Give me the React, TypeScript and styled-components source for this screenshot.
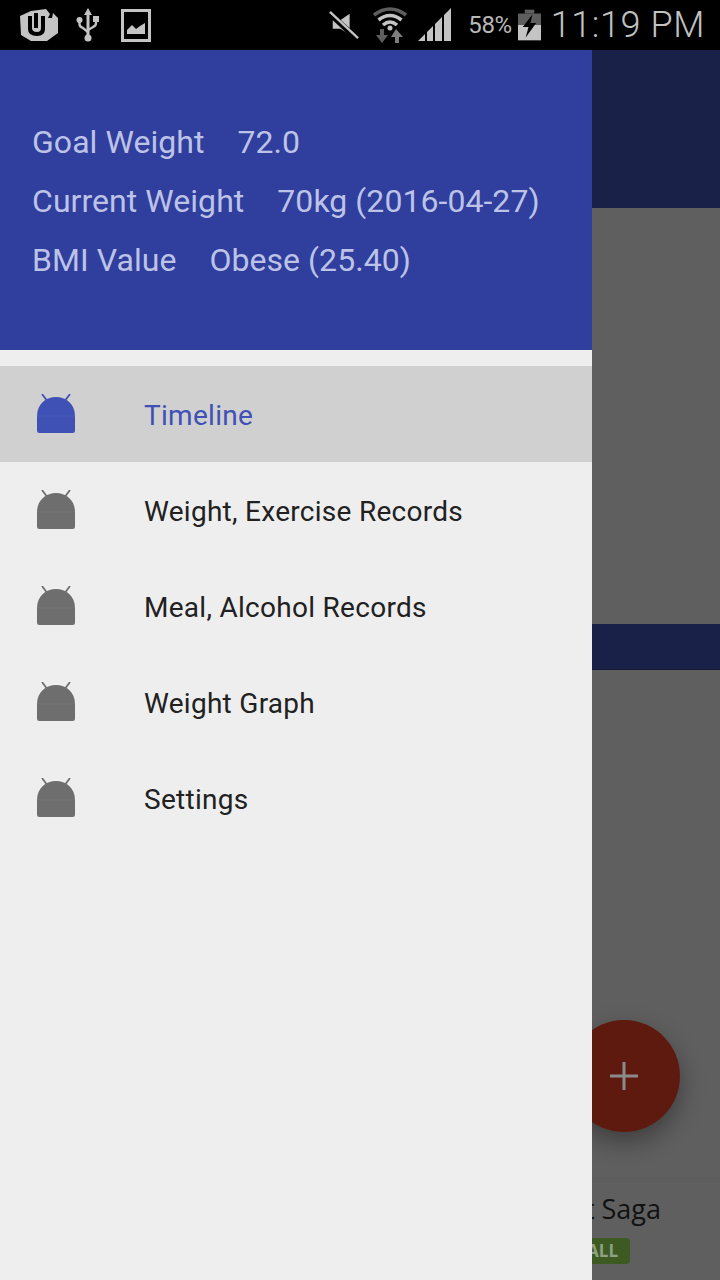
import React from 'react';
import styled, { createGlobalStyle } from 'styled-components';

const GlobalStyle = createGlobalStyle`
  html, body {
    margin: 0;
    padding: 0;
    background: #000;
  }
`;

const Screen = styled.div`
  width: 720px;
  height: 1280px;
  display: flex;
  flex-direction: column;
  overflow: hidden;
  font-family: Roboto, "Liberation Sans", sans-serif;
`;

const StatusBar = styled.div`
  height: 50px;
  flex: none;
  background: #000;
  display: flex;
  align-items: center;
  justify-content: space-between;
  color: #bdbdbd;
`;

const StatusLeft = styled.div`
  display: flex;
  align-items: center;
  padding-left: 19px;
`;

const StatusRight = styled.div`
  display: flex;
  align-items: center;
  padding-right: 15px;
`;

const StatusIcon = styled.svg<{ $gap?: number }>`
  display: block;
  flex: none;
  margin-left: ${p => p.$gap ?? 0}px;
`;

const Percent = styled.span`
  font-size: 24px;
  margin: 0 6px 0 16px;
  letter-spacing: -0.4px;
  color: #b8b8b8;
`;

const Clock = styled.span`
  font-size: 36px;
  font-weight: 300;
  margin-left: 10px;
  letter-spacing: 0.6px;
  color: #c2c2c2;
`;

const Body = styled.div`
  flex: 1;
  display: flex;
  min-height: 0;
`;

const Drawer = styled.nav`
  width: 592px;
  flex: none;
  background: #eeeeee;
  display: flex;
  flex-direction: column;
`;

const DrawerHeader = styled.div`
  height: 300px;
  box-sizing: border-box;
  background: #303e9e;
  padding: 73px 0 0 32px;
  display: flex;
  flex-direction: column;
  gap: 21px;
`;

const StatRow = styled.div`
  display: flex;
  gap: 33px;
  font-size: 32px;
  line-height: 38px;
  letter-spacing: 0.05px;
  color: #bcc3e6;
`;

const Menu = styled.ul`
  list-style: none;
  margin: 16px 0 0;
  padding: 0;
`;

const MenuItem = styled.li<{ $active?: boolean }>`
  height: 96px;
  display: flex;
  align-items: center;
  padding-left: 36px;
  gap: 68px;
  font-size: 28px;
  font-weight: 400;
  letter-spacing: 0.28px;
  background: ${p => (p.$active ? '#d0d0d0' : 'transparent')};
  color: ${p => (p.$active ? '#3f51b5' : '#212121')};

  span {
    position: relative;
    top: 1px;
  }
`;

const Backdrop = styled.div`
  position: relative;
  flex: 1;
  background: #5f5f5f;
  display: flex;
  flex-direction: column;
  overflow: hidden;
`;

const TopBand = styled.div`
  height: 158px;
  flex: none;
  background: #1a2149;
`;

const MidBand = styled.div`
  height: 46px;
  flex: none;
  margin-top: 416px;
  background: #1a2149;
  border-bottom: 1px solid #171b38;
  box-sizing: border-box;
`;

const CardFooter = styled.div`
  margin-top: auto;
  height: 102px;
  box-sizing: border-box;
  border-top: 1px solid #5b5b5b;
  display: flex;
  flex-direction: column;
  align-items: flex-end;
`;

const CardTitle = styled.div`
  font-family: "Open Sans", sans-serif;
  font-size: 27px;
  line-height: 36px;
  margin: 12px 59px 0 0;
  color: #111;
  white-space: nowrap;
`;

const CardBadge = styled.div`
  width: 60px;
  height: 26px;
  margin: 11px 90px 0 0;
  box-sizing: border-box;
  background: #3e5a23;
  border-radius: 0 4px 4px 0;
  color: #8fa183;
  font-family: "Open Sans", sans-serif;
  font-weight: 700;
  font-size: 17px;
  line-height: 26px;
  padding-right: 12px;
  text-align: right;
`;

const Fab = styled.div`
  position: absolute;
  left: -24px;
  top: 970px;
  width: 112px;
  height: 112px;
  border-radius: 50%;
  background: #5f1a10;
  box-shadow: 0 10px 24px rgba(0, 0, 0, 0.35);
  display: flex;
  align-items: center;
  justify-content: center;
`;

const DroidSvg = styled.svg`
  flex: none;
`;

const DroidIcon = ({ color }: { color: string }) => (
  <DroidSvg width="40" height="40" viewBox="0 0 40 40">
    <path d="M6 0 L12 8 M34 0 L28 8" stroke={color} strokeWidth="1.8" fill="none" />
    <path
      d="M1 22 C1 10 10 3 20 3 C30 3 39 10 39 22 L39 36.5 Q39 39 36.5 39 L3.5 39 Q1 39 1 36.5 Z"
      fill={color}
    />
    <path d="M1 22 L39 22" stroke="#fff" strokeOpacity="0.06" strokeWidth="1" />
  </DroidSvg>
);

const menu = ['Timeline', 'Weight, Exercise Records', 'Meal, Alcohol Records', 'Weight Graph', 'Settings'];

const stats = [
  ['Goal Weight', '72.0'],
  ['Current Weight', '70kg (2016-04-27)'],
  ['BMI Value', 'Obese (25.40)'],
];

export default function App() {
  return (
    <Screen>
      <GlobalStyle />
      <StatusBar>
        <StatusLeft>
          <StatusIcon width="40" height="34" viewBox="0 0 40 34">
            <path
              d="M1 8 L12 3 L27 1 L31 6 L29 10 L33 10 L34 5 L39 10 L39 25 L28 33 L12 33 L2 27 Z"
              fill="#c4c4c4"
            />
            <path d="M9 8 L9 21 Q9 28 18 28 Q26 28 26 21 L26 8 L22 8 L22 20 Q22 24 18 24 Q13 24 13 20 L13 8 Z" fill="#000" />
            <path d="M15 5 L19 5 L19 20 L15 20 Z" fill="#000" />
          </StatusIcon>
          <StatusIcon $gap={17} width="24" height="34" viewBox="0 0 24 34">
            <path d="M12 0 L16 7 L13.5 7 L13.5 27 L10.5 27 L10.5 7 L8 7 Z" fill="#c4c4c4" />
            <circle cx="12" cy="30" r="3.5" fill="#c4c4c4" />
            <circle cx="3.5" cy="12" r="3" fill="#c4c4c4" />
            <rect x="17" y="8" width="6" height="6" fill="#c4c4c4" />
            <path d="M3.5 13 L3.5 16 Q3.5 19 7 20 L12 24 M20 13 L20 15 Q20 18 17 19 L12 22" stroke="#c4c4c4" strokeWidth="2.4" fill="none" />
          </StatusIcon>
          <StatusIcon $gap={21} width="30" height="33" viewBox="0 0 30 33">
            <rect x="1.5" y="1.5" width="27" height="30" fill="none" stroke="#c4c4c4" strokeWidth="3" />
            <path d="M6 25 L6 21 L11 16 L15 20 L19 17 L24 14 L24 25 Z" fill="#c4c4c4" />
          </StatusIcon>
        </StatusLeft>
        <StatusRight>
          <StatusIcon width="30" height="30" viewBox="0 0 32 30">
            <path d="M4 10 L12 10 L22 3 L22 25 L12 19 L4 19 Z" fill="#c4c4c4" />
            <path d="M1 3 L29 29" stroke="#000" strokeWidth="6" />
            <path d="M1 1 L31 29" stroke="#c4c4c4" strokeWidth="2.5" />
          </StatusIcon>
          <StatusIcon $gap={14} width="34" height="36" viewBox="0 0 34 36">
            <path d="M1 8 Q17 -4 33 8" stroke="#5e5e5e" strokeWidth="3.5" fill="none" />
            <path d="M5.5 13 Q17 4 28.5 13" stroke="#c4c4c4" strokeWidth="3.5" fill="none" />
            <path d="M10 18 Q17 12 24 18" stroke="#c4c4c4" strokeWidth="3.5" fill="none" />
            <circle cx="17" cy="21" r="2.5" fill="#c4c4c4" />
            <path d="M9 36 L3 28 L7 28 L7 22 L11 22 L11 28 L15 28 Z" fill="#5e5e5e" />
            <path d="M23 22 L30 30 L26 30 L26 36 L22 36 L22 30 L18 30 Z" fill="#7d7d7d" />
          </StatusIcon>
          <StatusIcon $gap={11} width="34" height="34" viewBox="0 0 34 34">
            <path d="M0 33 L7 33 L7 26 Z M9 33 L15 33 L15 18 L9 24 Z M17 33 L24 33 L24 9 L17 16 Z M26 33 L33 33 L33 0 L26 7 Z" fill="#c4c4c4" />
          </StatusIcon>
          <Percent>58%</Percent>
          <StatusIcon width="23" height="32" viewBox="0 0 24 32">
            <rect x="7" y="0" width="10" height="4" fill="#5e5e5e" />
            <rect x="0" y="4" width="24" height="12" fill="#5e5e5e" />
            <rect x="0" y="16" width="24" height="16" fill="#c4c4c4" />
            <path d="M15 5 L5 18 L11 18 L8 29 L19 14 L13 14 Z" fill="#000" />
          </StatusIcon>
          <Clock>11:19 PM</Clock>
        </StatusRight>
      </StatusBar>
      <Body>
        <Drawer>
          <DrawerHeader>
            {stats.map(([label, value]) => (
              <StatRow key={label}>
                <span>{label}</span>
                <span>{value}</span>
              </StatRow>
            ))}
          </DrawerHeader>
          <Menu>
            {menu.map((item, i) => (
              <MenuItem key={item} $active={i === 0}>
                <DroidIcon color={i === 0 ? '#3f51b5' : '#6e6e6e'} />
                <span>{item}</span>
              </MenuItem>
            ))}
          </Menu>
        </Drawer>
        <Backdrop>
          <TopBand />
          <MidBand />
          <Fab>
            <svg width="30" height="30" viewBox="0 0 30 30">
              <path d="M15 1 L15 29 M1 15 L29 15" stroke="#8a8a8a" strokeWidth="3" />
            </svg>
          </Fab>
          <CardFooter>
            <CardTitle>t Saga</CardTitle>
            <CardBadge>ALL</CardBadge>
          </CardFooter>
        </Backdrop>
      </Body>
    </Screen>
  );
}
